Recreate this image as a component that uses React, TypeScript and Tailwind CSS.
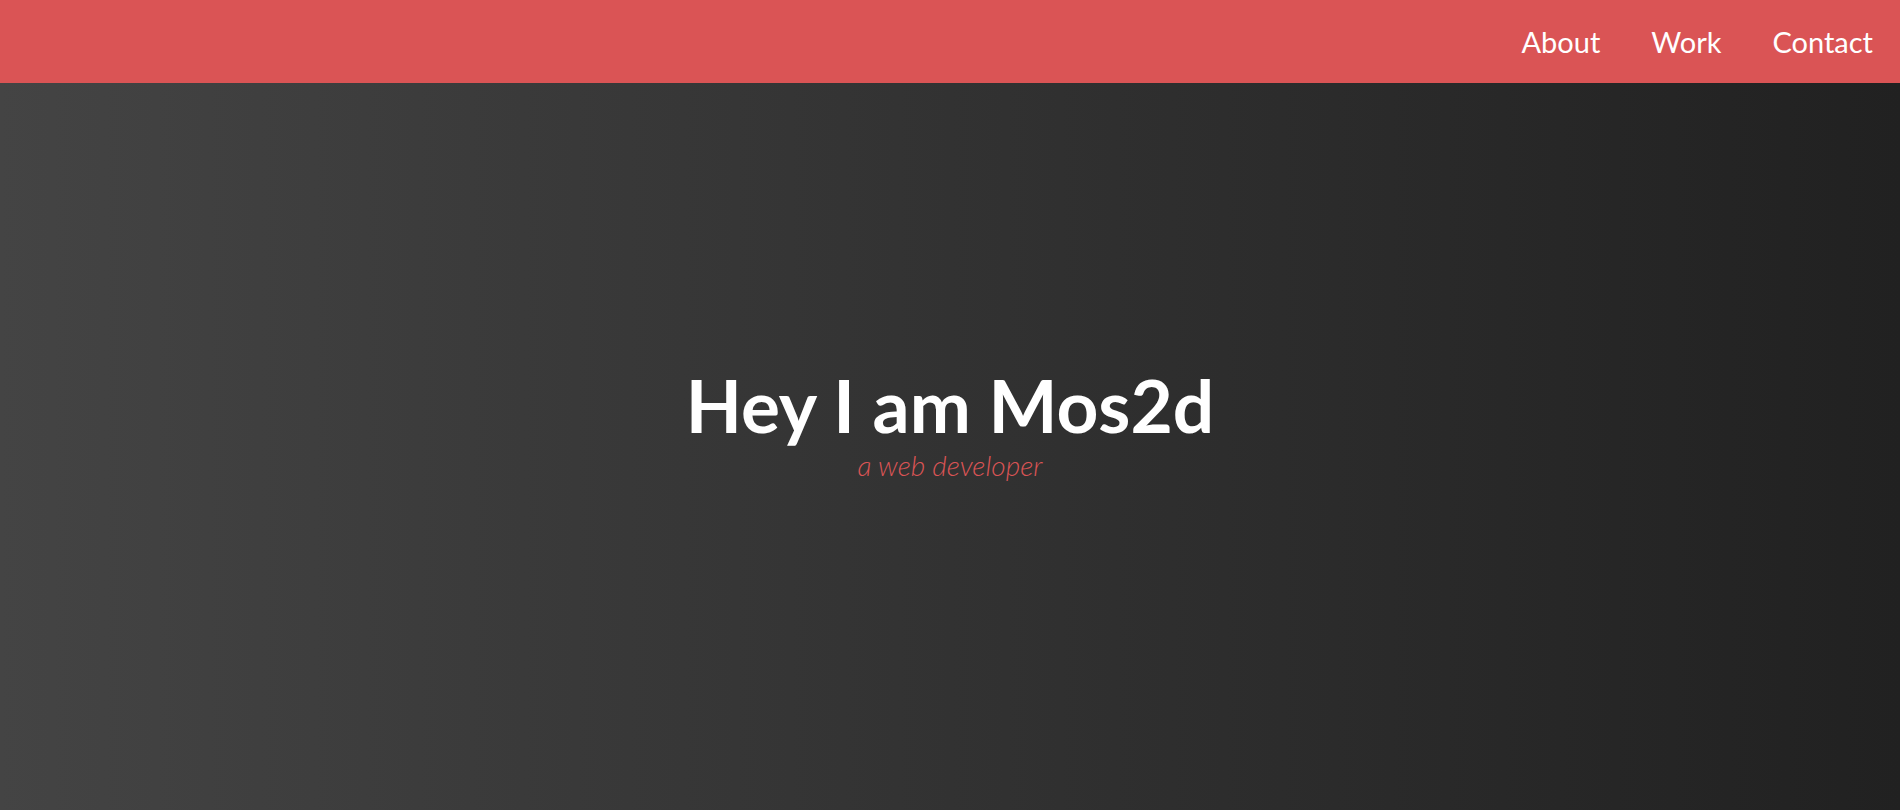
export default function App() {
  const links = ['About', 'Work', 'Contact'];

  return (
    <div className="flex h-[810px] w-full flex-col overflow-hidden font-['Lato',sans-serif]">
      <header className="flex h-[83px] shrink-0 items-center justify-end bg-[#da5455] pr-[27px]">
        <nav className="flex gap-[51px]">
          {links.map((link) => (
            <a key={link} href="#" className="text-[29px] leading-none text-white">
              {link}
            </a>
          ))}
        </nav>
      </header>

      <main className="flex flex-1 flex-col items-center justify-center bg-gradient-to-r from-[#444444] to-[#212121] pb-[46px]">
        <h1 className="text-[73px] font-bold leading-none text-white">Hey I am Mos2d</h1>
        <p className="mt-[9px] text-[28px] font-light italic leading-none text-[#da5455]">a web developer</p>
      </main>
    </div>
  );
}
